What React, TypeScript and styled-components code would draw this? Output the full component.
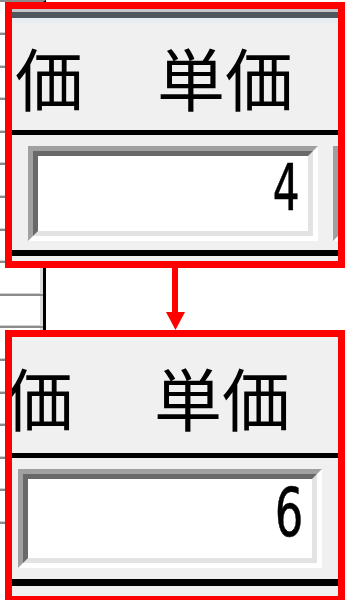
import React from 'react';
import styled, { createGlobalStyle } from 'styled-components';

const Global = createGlobalStyle`
  html, body { margin: 0; padding: 0; background: #ffffff; }
  #root { width: 345px; height: 600px; }
`;

const Stage = styled.div`
  position: relative;
  width: 345px;
  height: 600px;
  overflow: hidden;
  background: #ffffff;
  font-family: "Noto Sans CJK JP", "Noto Sans", sans-serif;
`;

/* spreadsheet fragment lying underneath the callout panels */
const Backdrop = styled.div`
  position: absolute;
  left: 0;
  top: 0;
  width: 46px;
  display: flex;
  flex-direction: column;
  box-sizing: border-box;
  border-top: 2px solid #8c8c8c;
  border-right: 3px solid #000000;
  z-index: 0;
`;

const BackRow = styled.div<{ $h: number }>`
  height: ${p => p.$h}px;
  flex-shrink: 0;
  box-sizing: border-box;
  background: #ffffff;
  border-bottom: 2px solid #8c8c8c;
  box-shadow: inset -3px 0 0 #dcdcdc, inset 0 -1px 0 #d0d0d0;
`;

const Column = styled.div`
  position: relative;
  z-index: 1;
  display: flex;
  flex-direction: column;
  padding: 2px 0 0 5px;
`;

const Panel = styled.div<{ $h: number }>`
  width: 340px;
  height: ${p => p.$h}px;
  flex-shrink: 0;
  box-sizing: border-box;
  border: 7px solid #ff0000;
  background: #f0f0f0;
  overflow: hidden;
  display: flex;
  flex-direction: column;
`;

const TitleBand = styled.div`
  height: 14px;
  flex-shrink: 0;
  background: linear-gradient(
    to bottom,
    #c3c7cc 0px, #c3c7cc 3px,
    #4f565e 3px, #4f565e 9px,
    #e8edf3 9px, #e8edf3 14px
  );
`;

const HeaderRow = styled.div<{ $h: number; $pad: number }>`
  height: ${p => p.$h}px;
  flex-shrink: 0;
  box-sizing: border-box;
  padding-top: ${p => p.$pad}px;
  display: flex;
  align-items: center;
  white-space: nowrap;
`;

const HeadLabel = styled.span<{ $offset: number }>`
  flex-shrink: 0;
  margin-left: ${p => p.$offset}px;
  font-size: 68px;
  line-height: 1;
  font-weight: 400;
  color: #000000;
`;

const Rule = styled.div<{ $h: number }>`
  height: ${p => p.$h}px;
  flex-shrink: 0;
  background: #000000;
`;

const InputArea = styled.div<{ $h: number; $inset: number; $top: number }>`
  height: ${p => p.$h}px;
  flex-shrink: 0;
  box-sizing: border-box;
  padding: ${p => p.$top}px 0 0 ${p => p.$inset}px;
  display: flex;
  align-items: flex-start;
  gap: 15px;
`;

const InputFrame = styled.div<{ $w: number; $h: number }>`
  width: ${p => p.$w}px;
  height: ${p => p.$h}px;
  flex-shrink: 0;
  box-sizing: border-box;
  border: 5px solid;
  border-color: #a0a0a0 #ffffff #ffffff #a0a0a0;
`;

const InputField = styled.div<{ $pad: number }>`
  height: 100%;
  box-sizing: border-box;
  border: 5px solid;
  border-color: #696969 #e3e3e3 #e3e3e3 #696969;
  background: #ffffff;
  display: flex;
  justify-content: flex-end;
  align-items: flex-start;
  padding-right: ${p => p.$pad}px;
`;

const Digit = styled.span<{ $size: number }>`
  font-family: "DejaVu Sans", "Liberation Sans", sans-serif;
  font-size: ${p => p.$size}px;
  line-height: 1;
  color: #000000;
  transform: scaleX(0.66);
  transform-origin: right top;
  -webkit-text-stroke: 0.6px #000000;
`;

const Tail = styled.div<{ $h: number }>`
  height: ${p => p.$h}px;
  flex-shrink: 0;
`;

const ArrowRow = styled.div`
  height: 62px;
  flex-shrink: 0;
  padding-left: 161px;
  display: flex;
`;

type PanelSpec = {
  band: boolean;
  height: number;
  headerH: number;
  headerPad: number;
  lead: number;
  gap: number;
  line1: number;
  areaH: number;
  inset: number;
  inputTop: number;
  inputW: number;
  inputH: number;
  line2: number;
  tail: number;
  value: string;
  size: number;
  digitPad: number;
  showNext: boolean;
};

const panels: PanelSpec[] = [
  {
    band: true, height: 266, headerH: 107, headerPad: 0, lead: 3, gap: 74,
    line1: 5, areaH: 115, inset: 16, inputTop: 11, inputW: 290, inputH: 95,
    line2: 6, tail: 5, value: '4', size: 64, digitPad: 8, showNext: true,
  },
  {
    band: false, height: 273, headerH: 116, headerPad: 4, lead: -7, gap: 81,
    line1: 5, areaH: 121, inset: 6, inputTop: 11, inputW: 304, inputH: 99,
    line2: 7, tail: 10, value: '6', size: 68, digitPad: 9, showNext: false,
  },
];

const rowHeights = [33, ...Array.from({ length: 15 }, () => 32.6)];

const CalloutPanel: React.FC<{ spec: PanelSpec }> = ({ spec }) => (
  <Panel $h={spec.height}>
    {spec.band && <TitleBand />}
    <HeaderRow $h={spec.headerH} $pad={spec.headerPad}>
      <HeadLabel $offset={spec.lead}>価</HeadLabel>
      <HeadLabel $offset={spec.gap}>単価</HeadLabel>
    </HeaderRow>
    <Rule $h={spec.line1} />
    <InputArea $h={spec.areaH} $inset={spec.inset} $top={spec.inputTop}>
      <InputFrame $w={spec.inputW} $h={spec.inputH}>
        <InputField $pad={spec.digitPad}>
          <Digit $size={spec.size}>{spec.value}</Digit>
        </InputField>
      </InputFrame>
      {spec.showNext && (
        <InputFrame $w={spec.inputW} $h={spec.inputH}>
          <InputField $pad={spec.digitPad} />
        </InputFrame>
      )}
    </InputArea>
    <Rule $h={spec.line2} />
    <Tail $h={spec.tail} />
  </Panel>
);

const DownArrow: React.FC = () => (
  <svg width="20" height="62" viewBox="0 0 20 62">
    <rect x="6" y="0" width="6" height="46" fill="#ff0000" />
    <polygon points="0,44 19,44 9.5,62" fill="#ff0000" />
  </svg>
);

export default function App() {
  return (
    <>
      <Global />
      <Stage>
        <Backdrop>
          {rowHeights.map((h, i) => (
            <BackRow key={i} $h={h} />
          ))}
        </Backdrop>
        <Column>
          <CalloutPanel spec={panels[0]} />
          <ArrowRow>
            <DownArrow />
          </ArrowRow>
          <CalloutPanel spec={panels[1]} />
        </Column>
      </Stage>
    </>
  );
}
